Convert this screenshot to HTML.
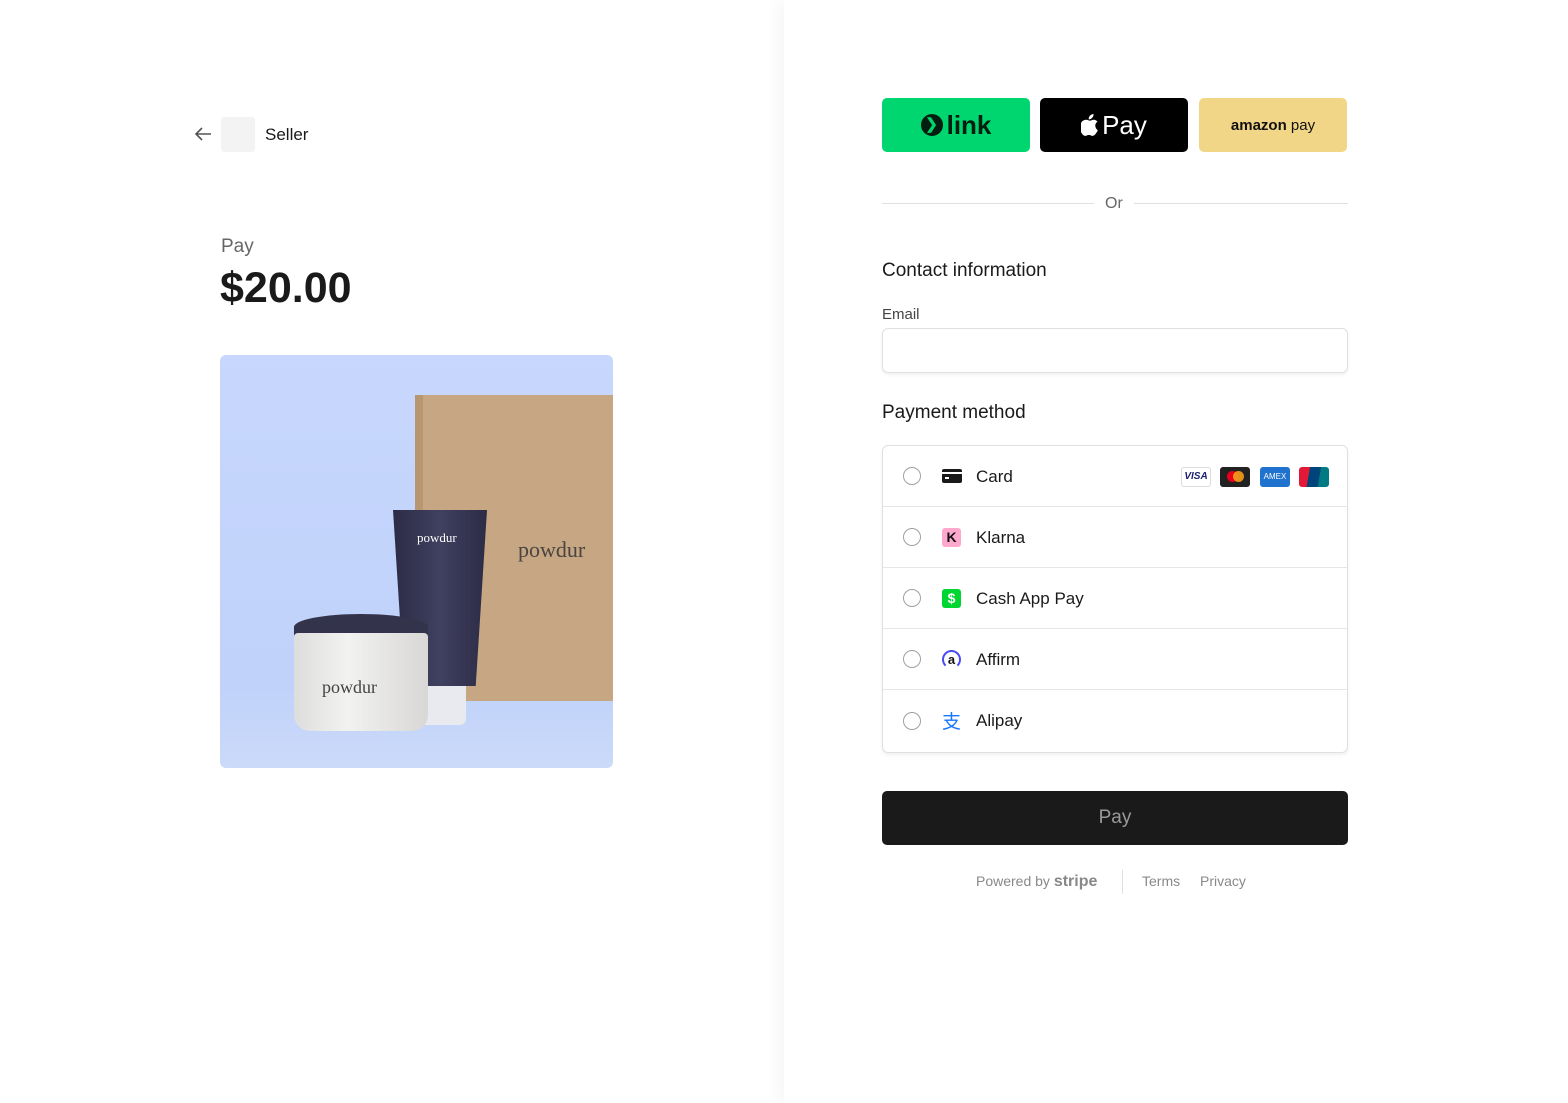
<!DOCTYPE html>
<html><head><style>
*{box-sizing:border-box;margin:0;padding:0}
body{width:1568px;height:1103px;font-family:"Liberation Sans",sans-serif;background:#fff;position:relative;overflow:hidden;color:#1a1a1a}
.abs{position:absolute}
.right{position:absolute;left:784px;top:0;width:784px;height:1103px;background:#fff;box-shadow:-6px 0 16px rgba(0,0,0,.04)}
.btn{position:absolute;top:98px;width:148px;height:54px;border-radius:5px;display:flex;align-items:center;justify-content:center}
.row{position:absolute;left:0;width:465px;height:61px;border-bottom:1px solid #e6e6e6;display:flex;align-items:center}
.radio{position:absolute;left:20px;width:18px;height:18px;border-radius:50%;border:1px solid #a0a0a0;background:#fff}
.ic{position:absolute;left:59px;width:19px;height:19px;border-radius:3px;display:flex;align-items:center;justify-content:center;font-weight:bold;font-size:14px}
.lbl{position:absolute;left:93px;font-size:17px;color:#1a1a1a;top:21px}
</style></head><body>
<svg class="abs" style="left:194px;top:126px" width="18" height="16" viewBox="0 0 18 16"><path d="M17 8H2M8 2L2 8l6 6" fill="none" stroke="#555" stroke-width="1.6"/></svg>
<div class="abs" style="left:221px;top:117px;width:34px;height:35px;background:#f3f3f3;border-radius:3px"></div>
<div class="abs" style="left:265px;top:125px;font-size:17px">Seller</div>
<div class="abs" style="left:221px;top:236px;font-size:19px;color:#666">Pay</div>
<div class="abs" style="left:220px;top:264px;font-size:43px;font-weight:bold;color:#1a1a1a">$20.00</div>
<div class="abs" style="left:220px;top:355px;width:393px;height:413px;background:linear-gradient(#c7d7fd,#c0d2fa 80%,#cbdaf9);border-radius:6px;overflow:hidden">
 <div class="abs" style="left:195px;top:40px;width:198px;height:306px;background:#c7a683"></div>
 <div class="abs" style="left:195px;top:40px;width:8px;height:306px;background:#b8966f"></div>
 <div class="abs" style="left:298px;top:182px;font-family:'Liberation Serif',serif;font-size:22px;color:#4a4540">powdur</div>
 <div class="abs" style="left:178px;top:325px;width:68px;height:45px;background:#e8eaf0;border-radius:0 0 6px 6px"></div>
 <div class="abs" style="left:173px;top:155px;width:94px;height:176px;background:linear-gradient(90deg,#2c2c46,#404060 50%,#2c2c46);clip-path:polygon(0 0,100% 0,88% 100%,12% 100%)"></div>
 <div class="abs" style="left:197px;top:175px;font-family:'Liberation Serif',serif;font-size:13px;color:#fff">powdur</div>
 <div class="abs" style="left:74px;top:259px;width:134px;height:26px;background:#33334c;border-radius:50% 50% 6px 6px"></div>
 <div class="abs" style="left:74px;top:278px;width:134px;height:98px;background:linear-gradient(90deg,#dedddd,#f2f2f0 40%,#d8d7d6);border-radius:4px 4px 16px 16px"></div>
 <div class="abs" style="left:102px;top:322px;font-family:'Liberation Serif',serif;font-size:18px;color:#444">powdur</div>
</div>
<div class="right">
 <div class="btn" style="left:98px;background:#00d66f;font-size:26px;font-weight:bold;color:#011e0f"><span style="display:inline-block;width:22px;height:22px;border-radius:50%;background:#011e0f;color:#00d66f;font-size:15px;line-height:22px;text-align:center;margin-right:4px">&#10095;</span>link</div>
 <div class="btn" style="left:256px;background:#000;color:#fff;font-size:26px"><svg width="18" height="22" viewBox="0 0 18 22" style="margin-right:3px"><path d="M12.5 0c.2 1.5-.5 3-1.4 3.9-.9 1-2.2 1.6-3.4 1.5-.2-1.4.5-2.9 1.3-3.8C10 .7 11.4 0 12.5 0zM16.8 16.2c-.5 1.1-.7 1.6-1.4 2.6-.9 1.4-2.2 3.1-3.8 3.1-1.4 0-1.8-.9-3.7-.9s-2.3.9-3.7.9c-1.6 0-2.8-1.6-3.7-3C-1.9 15-1.2 8.9 1.8 6.9 2.9 6.2 4.1 5.8 5.3 5.8c1.5 0 2.5.9 3.7.9 1.2 0 2-.9 3.8-.9 1.3 0 2.7.7 3.7 1.9-3.3 1.8-2.7 6.5.3 8.5z" fill="#fff"/></svg>Pay</div>
 <div class="btn" style="left:415px;background:#f2d687;color:#111;font-size:15px"><b>amazon</b>&nbsp;pay</div>
 <div class="abs" style="left:98px;top:203px;width:212px;height:1px;background:#e0e0e0"></div>
 <div class="abs" style="left:350px;top:203px;width:214px;height:1px;background:#e0e0e0"></div>
 <div class="abs" style="left:321px;top:195px;font-size:16px;color:#666">Or</div>
 <div class="abs" style="left:98px;top:260px;font-size:19px">Contact information</div>
 <div class="abs" style="left:98px;top:306px;font-size:15px;color:#444">Email</div>
 <div class="abs" style="left:98px;top:328px;width:466px;height:45px;border:1px solid #e0e0e0;border-radius:6px;box-shadow:0 2px 3px rgba(0,0,0,.06)"></div>
 <div class="abs" style="left:98px;top:402px;font-size:19px">Payment method</div>
 <div class="abs" style="left:98px;top:445px;width:466px;height:308px;border:1px solid #e0e0e0;border-radius:6px;box-shadow:0 2px 3px rgba(0,0,0,.06);overflow:hidden">
  <div class="row" style="top:0"><div class="radio"></div><div class="abs" style="left:59px;top:23px;width:20px;height:14px;background:#1a1a1a;border-radius:2px"><div class="abs" style="left:0;top:3px;width:20px;height:2px;background:#fff"></div><div class="abs" style="left:3px;top:8px;width:4px;height:2px;background:#fff"></div></div><div class="lbl">Card</div>
   <div class="abs" style="left:298px;top:21px;width:30px;height:20px;border:1px solid #ddd;border-radius:3px;font-size:10px;font-weight:bold;font-style:italic;color:#1a1f71;text-align:center;line-height:18px">VISA</div>
   <div class="abs" style="left:337px;top:21px;width:30px;height:20px;background:#222;border-radius:3px"><div class="abs" style="left:7px;top:4px;width:11px;height:11px;border-radius:50%;background:#eb001b"></div><div class="abs" style="left:13px;top:4px;width:11px;height:11px;border-radius:50%;background:#f79e1b;opacity:.9"></div></div>
   <div class="abs" style="left:377px;top:21px;width:30px;height:20px;background:#1f72cd;border-radius:3px;color:#fff;font-size:8px;text-align:center;line-height:20px">AMEX</div>
   <div class="abs" style="left:416px;top:21px;width:30px;height:20px;border-radius:3px;background:linear-gradient(100deg,#e21836 33%,#00447c 33%,#00447c 66%,#007b84 66%)"></div>
  </div>
  <div class="row" style="top:61px"><div class="radio"></div><div class="ic" style="background:#ffa8cd;color:#111">K</div><div class="lbl">Klarna</div></div>
  <div class="row" style="top:122px"><div class="radio"></div><div class="ic" style="background:#00d632;color:#fff">$</div><div class="lbl">Cash App Pay</div></div>
  <div class="row" style="top:183px"><div class="radio"></div><div class="ic" style="border:2px solid #4a4af4;border-bottom-color:transparent;border-radius:50%;color:#111;font-size:13px">a</div><div class="lbl">Affirm</div></div>
  <div class="row" style="top:244px;border:none"><div class="radio"></div><div class="ic" style="color:#1677ff;font-size:19px;font-weight:normal;font-family:'Noto Sans CJK SC',sans-serif">支</div><div class="lbl">Alipay</div></div>
 </div>
 <div class="abs" style="left:98px;top:791px;width:466px;height:54px;background:#1a1a1a;border-radius:5px;color:#9a9a9a;font-size:19px;text-align:center;line-height:54px">Pay</div>
 <div class="abs" style="left:192px;top:873px;font-size:14px;color:#888">Powered by <b style="font-size:16px">stripe</b></div>
 <div class="abs" style="left:338px;top:870px;width:1px;height:24px;background:#e0e0e0"></div>
 <div class="abs" style="left:358px;top:873px;font-size:14px;color:#888">Terms</div>
 <div class="abs" style="left:416px;top:873px;font-size:14px;color:#888">Privacy</div>
</div>
</body></html>
